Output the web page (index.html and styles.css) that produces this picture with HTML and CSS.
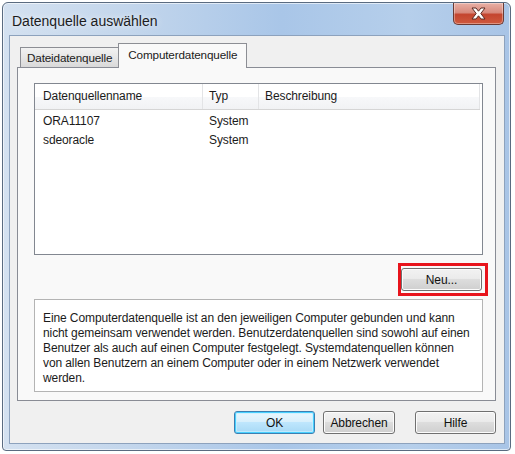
FILE: index.html
```html
<!DOCTYPE html>
<html lang="de">
<head>
<meta charset="utf-8">
<title>Datenquelle auswählen</title>
<link rel="stylesheet" href="styles.css">
</head>
<body>
<div class="window">
  <div class="titlebar">
    <span class="title">Datenquelle auswählen</span>
    <div class="close">
      <svg width="17" height="13" viewBox="0 0 17 13">
        <path d="M2 1 L6 1 L8.5 4.2 L11 1 L15 1 L10.8 6.5 L15 12 L11 12 L8.5 8.8 L6 12 L2 12 L6.2 6.5 Z" fill="#fff" stroke="#5b2a22" stroke-width="1" stroke-linejoin="round"/>
      </svg>
    </div>
  </div>
  <div class="client">
    <div class="tabs">
      <div class="tab">Dateidatenquelle</div>
      <div class="tab active">Computerdatenquelle</div>
    </div>
    <div class="panel">
      <div class="listview">
        <div class="lv-header">
          <div class="hcol">Datenquellenname</div>
          <div class="hcol">Typ</div>
          <div class="hcol">Beschreibung</div>
        </div>
        <div class="lv-body">
          <div class="lv-row"><span class="c1">ORA11107</span><span class="c2">System</span><span></span></div>
          <div class="lv-row"><span class="c1">sdeoracle</span><span class="c2">System</span><span></span></div>
        </div>
      </div>
      <div class="neu-row">
        <div class="marker"><button class="btn neu">Neu...</button></div>
      </div>
      <div class="desc">Eine Computerdatenquelle ist an den jeweiligen Computer gebunden und kann nicht gemeinsam verwendet werden. Benutzerdatenquellen sind sowohl auf einen Benutzer als auch auf einen Computer festgelegt. Systemdatenquellen können von allen Benutzern an einem Computer oder in einem Netzwerk verwendet werden.</div>
    </div>
    <div class="buttons">
      <button class="btn default">OK</button>
      <button class="btn">Abbrechen</button>
      <button class="btn">Hilfe</button>
    </div>
  </div>
</div>
</body>
</html>
```

FILE: styles.css
```css
* { box-sizing: border-box; }
html, body { margin: 0; padding: 0; background: #ffffff; }
body { font-family: "Liberation Sans", Arial, sans-serif; font-size: 12px; letter-spacing: -0.1px; color: #1b1b1b; }

.window {
  margin: 2px 0 0 2px;
  width: 509px;
  height: 449px;
  border: 1px solid #5a6b80;
  border-radius: 6px 6px 4px 4px;
  background: linear-gradient(90deg, #d4e1f0 0%, #c3d6ec 25%, #a9c6e8 55%, #b6cfeb 80%, #a8c4e6 100%);
  box-shadow: inset 0 0 0 1px rgba(255,255,255,0.6);
  display: flex;
  flex-direction: column;
  padding: 0 5px 6px 6px;
}

.titlebar {
  height: 32px;
  display: flex;
  align-items: flex-start;
  justify-content: space-between;
}
.title {
  font-size: 14px;
  letter-spacing: 0;
  color: #1c1c1c;
  margin: 10px 0 0 3px;
  text-shadow: 0 0 6px rgba(255,255,255,0.9);
}
.close {
  width: 51px;
  height: 22px;
  margin-right: 1px;
  border: 1px solid #6b3a33;
  border-top: none;
  border-radius: 0 0 5px 5px;
  background: linear-gradient(180deg, #e8b0a6 0%, #d88a7d 45%, #c4452f 55%, #cf5a3e 100%);
  display: flex;
  align-items: center;
  justify-content: center;
  box-shadow: inset 0 0 0 1px rgba(255,255,255,0.35);
}

.client {
  flex: 1;
  background: #f0f0f0;
  border: 1px solid #8da2bd;
  padding: 7px 8px 0 7px;
  display: flex;
  flex-direction: column;
}

.tabs {
  display: flex;
  align-items: flex-end;
  height: 24px;
  padding-left: 3px;
  position: relative;
  z-index: 1;
}
.tab {
  height: 20px;
  padding: 0 6px;
  border: 1px solid #8c8e94;
  border-bottom: none;
  background: linear-gradient(180deg, #f2f2f2 0%, #e6e6e6 50%, #d9d9d9 100%);
  line-height: 19px;
  color: #1b1b1b;
  font-size: 11.7px;
  letter-spacing: -0.15px;
}
.tab.active {
  height: 25px;
  padding: 0 9px;
  background: #f9f9f9;
  line-height: 22px;
  margin-left: -1px;
  margin-bottom: -1px;
}

.panel {
  height: 334px;
  background: #f9f9f9;
  border: 1px solid #898c95;
  padding: 15px 12px 8px 16px;
  display: flex;
  flex-direction: column;
}

.listview {
  height: 172px;
  background: #fff;
  border: 1px solid #828790;
}
.lv-header {
  display: grid;
  grid-template-columns: 168px 56px 1fr;
  height: 26px;
  background: linear-gradient(180deg, #ffffff 0%, #ffffff 50%, #f7f8fa 51%, #f1f2f4 100%);
  border-bottom: 1px solid #d5d5d5;
  margin-right: 2px;
}
.hcol {
  line-height: 25px;
  padding-left: 6px;
  border-right: 1px solid #e3e4e6;
}
.hcol:first-child { padding-left: 8px; }
.lv-body { padding-top: 2px; }
.lv-row {
  display: grid;
  grid-template-columns: 168px 56px 1fr;
  height: 19px;
  line-height: 19px;
}
.c1 { padding-left: 8px; }
.c2 { padding-left: 6px; }

.neu-row {
  display: flex;
  justify-content: flex-end;
  margin: 8px -5px 3px 0;
}
.marker {
  border: 3px solid #e8141c;
  padding: 2px 3px 2px 0;
}

.btn {
  font-family: "Liberation Sans", Arial, sans-serif;
  font-size: 12px;
  letter-spacing: -0.1px;
  color: #111;
  height: 23px;
  border: 1px solid #707070;
  border-radius: 3px;
  background: linear-gradient(180deg, #f2f2f2 0%, #ebebeb 45%, #dddddd 50%, #cfcfcf 100%);
  box-shadow: inset 0 0 0 1px #fcfcfc;
  padding: 0;
  display: block;
}
.neu { width: 81px; }

.desc {
  flex: 1;
  background: #fff;
  border: 1px solid #b4b4b4;
  padding: 11px 10px 0 8px;
  line-height: 15px;
}

.buttons {
  display: flex;
  justify-content: flex-end;
  gap: 8px;
  margin-top: 10px;
}
.buttons .btn { width: 81px; }
.buttons .btn:nth-child(2) { width: 72px; margin-right: 12px; }
.btn.default {
  border-color: #3c7fb1;
  box-shadow: inset 0 0 0 1px #48d0ff, inset 0 0 0 2px rgba(200,240,255,0.7);
  background: linear-gradient(180deg, #eaf6fd 0%, #d9f0fc 45%, #bee6fd 50%, #a7d9f5 100%);
}
```
